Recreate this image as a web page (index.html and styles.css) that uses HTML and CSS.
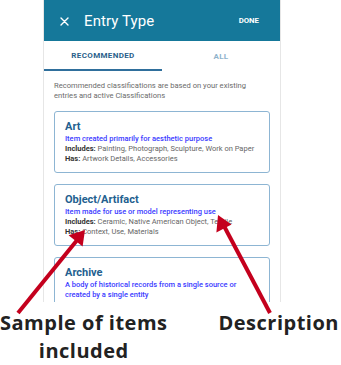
FILE: index.html
```html
<!DOCTYPE html>
<html>
<head>
<meta charset="utf-8">
<link rel="stylesheet" href="styles.css">
</head>
<body>
<div class="page">
  <div class="phone">
    <div class="appbar">
      <svg class="close" width="9" height="9" viewBox="0 0 9 9"><path d="M1 1L8 8M8 1L1 8" stroke="#fff" stroke-width="1.4" stroke-linecap="round"/></svg>
      <span class="title">Entry Type</span>
      <span class="done">DONE</span>
    </div>
    <div class="tabs">
      <div class="tab active">RECOMMENDED</div>
      <div class="tab">ALL</div>
    </div>
    <div class="content">
      <p class="intro">Recommended classifications are based on your existing entries and active Classifications</p>
      <div class="card">
        <div class="card-title">Art</div>
        <div class="card-desc">Item created primarily for aesthetic purpose</div>
        <div class="card-line"><b>Includes:</b> Painting, Photograph, Sculpture, Work on Paper</div>
        <div class="card-line"><b>Has:</b> Artwork Details, Accessories</div>
      </div>
      <div class="card">
        <div class="card-title">Object/Artifact</div>
        <div class="card-desc">Item made for use or model representing use</div>
        <div class="card-line"><b>Includes:</b> Ceramic, Native American Object, Textile</div>
        <div class="card-line"><b>Has:</b> Context, Use, Materials</div>
      </div>
      <div class="card">
        <div class="card-title">Archive</div>
        <div class="card-desc wrap">A body of historical records from a single source or created by a single entity</div>
      </div>
    </div>
  </div>
  <div class="captions">
    <div class="caption left">
      <div>Sample of items</div>
      <div class="second">included</div>
    </div>
    <div class="caption right">Description</div>
  </div>
  <svg class="arrows" width="341" height="365" viewBox="0 0 341 365">
    <g stroke="#c4001d" stroke-width="4" stroke-linecap="butt">
      <line x1="18" y1="313" x2="78" y2="239"/>
      <line x1="270" y1="313" x2="224" y2="226"/>
    </g>
    <g fill="#c4001d">
      <polygon points="85,230 82.6,246.6 68.6,235.2"/>
      <polygon points="218,215 231.5,224.5 216.4,232.5"/>
    </g>
  </svg>
</div>
</body>
</html>
```
FILE: styles.css
```css
html, body {
  margin: 0;
  padding: 0;
  background: #fff;
}
.page {
  position: relative;
  width: 341px;
  height: 365px;
  overflow: hidden;
}
.phone {
  margin-left: 43px;
  width: 236px;
  height: 302px;
  border-left: 1px solid #e6e6e6;
  border-right: 1px solid #e6e6e6;
  box-sizing: content-box;
  overflow: hidden;
  font-family: Roboto, "Liberation Sans", sans-serif;
}
.appbar {
  height: 41px;
  background: #15789a;
  display: flex;
  align-items: center;
  padding: 0 22px 0 17px;
  color: #fff;
  margin-left: -1px;
  margin-right: -1px;
}
.close {
  flex: none;
  margin-top: 1px;
}
.title {
  margin-left: 15px;
  font-size: 15px;
  flex: 1;
  letter-spacing: 0.1px;
}
.done {
  font-size: 7.8px;
  font-weight: 700;
}
.tabs {
  display: flex;
  height: 30px;
}
.tab {
  flex: 1;
  display: flex;
  align-items: center;
  justify-content: center;
  font-size: 8px;
  letter-spacing: 0.35px;
  font-weight: 700;
  color: #8fb3cc;
  box-sizing: border-box;
  padding-top: 1px;
}
.tab.active {
  color: #2b5f8b;
  border-bottom: 2px solid #2f6f9c;
}
.content {
  padding: 10px 10px 0 10px;
}
.intro {
  margin: 0 0 10px 0;
  font-size: 7.6px;
  line-height: 10px;
  color: #6b6b6b;
}
.card {
  border: 1px solid #8db5d3;
  border-radius: 3px;
  padding: 7px 10px 10px 10px;
  margin-bottom: 11px;
  box-sizing: border-box;
  height: 62px;
}
.card-title {
  font-size: 11px;
  font-weight: 700;
  line-height: 15px;
  color: #245f8f;
}
.card-desc {
  font-size: 7.5px;
  line-height: 10px;
  font-weight: 500;
  color: #3a3aff;
  white-space: nowrap;
}
.card-desc.wrap {
  white-space: normal;
  width: 180px;
}
.card-line {
  font-size: 7.5px;
  line-height: 10px;
  color: #666;
  white-space: nowrap;
}
.card-line b {
  color: #333;
}
.captions {
  display: flex;
  justify-content: space-between;
  align-items: flex-start;
  font-family: "Open Sans", "Liberation Sans", sans-serif;
  font-weight: 700;
  font-size: 20px;
  letter-spacing: 0.5px;
  line-height: 22px;
  color: #222;
  margin-top: 10px;
}
.caption.left {
  text-align: center;
  white-space: nowrap;
}
.caption .second {
  margin-top: 6px;
}
.caption.right {
  margin-right: 2px;
}
.arrows {
  position: absolute;
  left: 0;
  top: 0;
}
```
